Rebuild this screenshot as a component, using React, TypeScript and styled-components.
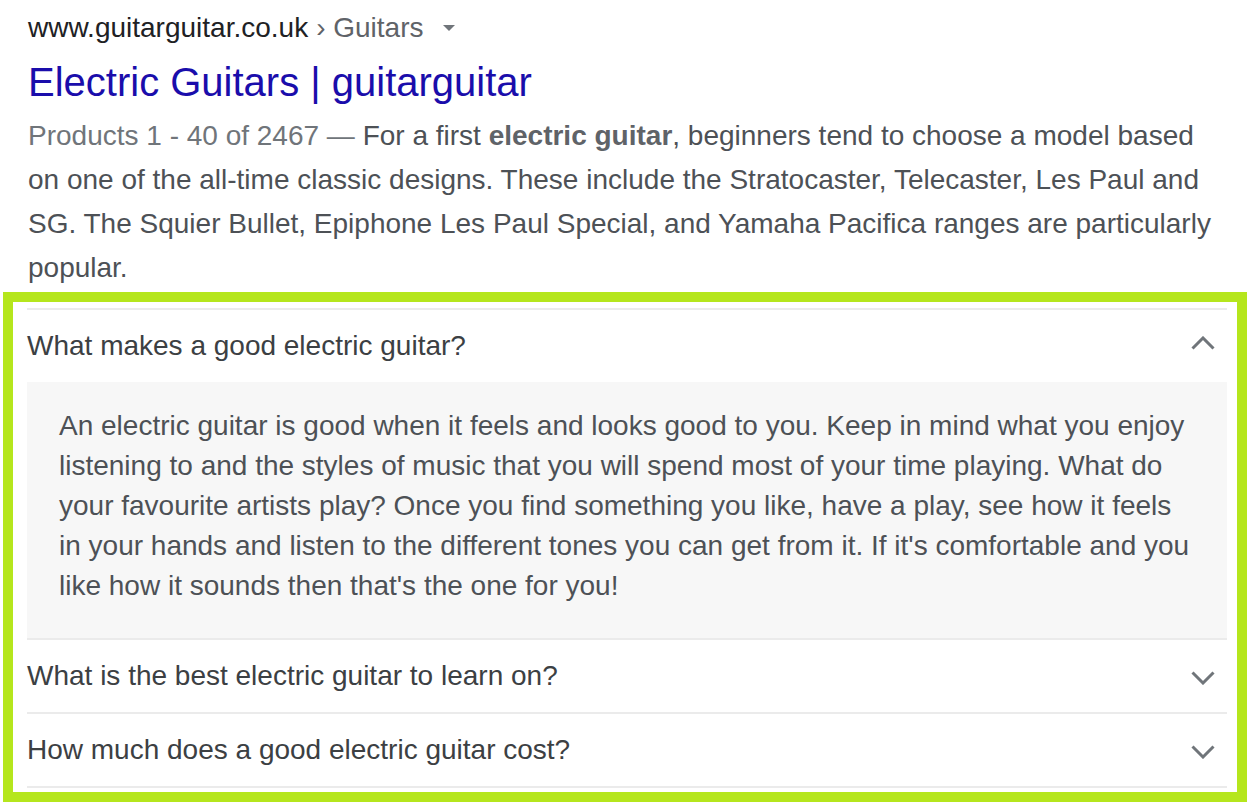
import React from "react";
import styled, { createGlobalStyle } from "styled-components";

const Global = createGlobalStyle`
  html, body { margin: 0; padding: 0; background: #ffffff; }
  body { font-family: "Liberation Sans", Arial, sans-serif; }
  * { box-sizing: border-box; }
`;

const Page = styled.div`
  width: 1253px;
  height: 811px;
  padding-top: 6px;
  overflow: hidden;
`;

const Result = styled.div`
  padding-left: 28px;
  width: 1212px;
`;

const UrlRow = styled.div`
  display: flex;
  align-items: center;
  height: 44px;
  font-size: 28px;
  line-height: 44px;
`;

const Domain = styled.span`
  color: #202124;
`;

const Crumb = styled.span`
  color: #5f6368;
  margin-left: 8px;
`;

const Caret = styled.span`
  margin-left: 19px;
  width: 0;
  height: 0;
  border-left: 6px solid transparent;
  border-right: 6px solid transparent;
  border-top: 6px solid #70757a;
`;

const Title = styled.h3`
  margin: 6px 0 0 0;
  font-weight: normal;
  font-size: 40px;
  line-height: 52px;
  color: #1a0dab;
`;

const Snippet = styled.div`
  margin-top: 6px;
  font-size: 28px;
  line-height: 44px;
  color: #4d5156;
`;

const Meta = styled.span`
  color: #70757a;
`;

const Em = styled.b`
  color: #5f6368;
`;

const Highlight = styled.div`
  margin: 2px 0 0 3px;
  width: 1244px;
  border: 10px solid #b5e61d;
  padding: 6px 10px 4px 14px;
`;

const Faq = styled.div`
  border-top: 2px solid #ebebeb;
`;

const Item = styled.div`
  border-bottom: 2px solid #ebebeb;
`;

const Question = styled.div`
  display: flex;
  align-items: center;
  justify-content: space-between;
  height: 72px;
  padding-right: 12px;
  font-size: 28px;
  color: #3c4043;
`;

const Answer = styled.div`
  background: #f7f7f7;
  padding: 24px 32px 32px 32px;
  font-size: 28px;
  line-height: 40px;
  color: #4d5156;
`;

const Chevron = ({ up }: { up?: boolean }) => (
  <svg width="24" height="14" viewBox="0 0 24 14" style={{ marginTop: up ? -6 : 4 }}>
    <polyline
      points={up ? "1.5,12.5 12,2 22.5,12.5" : "1.5,1.5 12,12 22.5,1.5"}
      fill="none"
      stroke="#70757a"
      strokeWidth="3"
    />
  </svg>
);

const faqs = [
  {
    q: "What makes a good electric guitar?",
    a: "An electric guitar is good when it feels and looks good to you. Keep in mind what you enjoy listening to and the styles of music that you will spend most of your time playing. What do your favourite artists play? Once you find something you like, have a play, see how it feels in your hands and listen to the different tones you can get from it. If it's comfortable and you like how it sounds then that's the one for you!",
    open: true,
  },
  { q: "What is the best electric guitar to learn on?", a: "", open: false },
  { q: "How much does a good electric guitar cost?", a: "", open: false },
];

export default function App() {
  return (
    <>
      <Global />
      <Page>
        <Result>
          <UrlRow>
            <Domain>www.guitarguitar.co.uk</Domain>
            <Crumb>› Guitars</Crumb>
            <Caret />
          </UrlRow>
          <Title>Electric Guitars | guitarguitar</Title>
          <Snippet>
            <Meta>Products 1 - 40 of 2467 — </Meta>For a first <Em>electric guitar</Em>, beginners tend to
            choose a model based on one of the all-time classic designs. These include the Stratocaster,
            Telecaster, Les Paul and SG. The Squier Bullet, Epiphone Les Paul Special, and Yamaha Pacifica
            ranges are particularly popular.
          </Snippet>
        </Result>
        <Highlight>
          <Faq>
            {faqs.map((f) => (
              <Item key={f.q}>
                <Question>
                  <span>{f.q}</span>
                  <Chevron up={f.open} />
                </Question>
                {f.open && <Answer>{f.a}</Answer>}
              </Item>
            ))}
          </Faq>
        </Highlight>
      </Page>
    </>
  );
}
